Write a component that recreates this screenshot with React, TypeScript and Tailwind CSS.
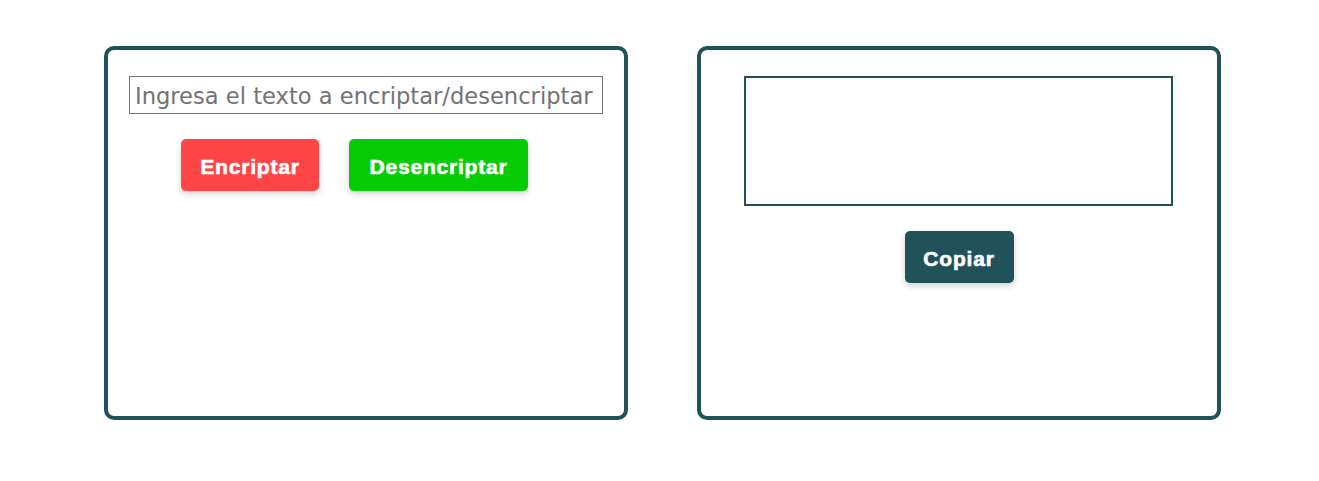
import React from "react";

const btnFont = {
  fontFamily: "'Liberation Sans', Arial, sans-serif",
  WebkitTextStroke: "0.6px white",
} as React.CSSProperties;

export default function App() {
  return (
    <div className="w-[1319px] h-[481px] bg-white flex items-start pt-[46px] pl-[104px] gap-[69px]">
      <div className="w-[524px] h-[374px] border-[4px] border-[#21525a] rounded-[10px] flex flex-col items-start pt-[26px] pl-[21px]">
        <input
          type="text"
          placeholder="Ingresa el texto a encriptar/desencriptar"
          className="w-[474px] h-[38px] border border-[#767676] px-[5px] pt-[2px] text-[22.6px] text-[#333] placeholder:text-[#737373] outline-none"
          style={{ fontFamily: "'DejaVu Sans', sans-serif" }}
        />
        <div className="flex gap-[30px] mt-[25px] ml-[52px]">
          <button
            className="w-[138px] h-[52px] rounded-[5px] bg-[#ff4646] text-white font-bold text-[21px] tracking-[0.8px] pt-[3px] shadow-[0_3px_6px_rgba(0,0,0,0.18)]"
            style={btnFont}
          >
            Encriptar
          </button>
          <button
            className="w-[179px] h-[52px] rounded-[5px] bg-[#05cc05] text-white font-bold text-[21px] tracking-[0.8px] pt-[3px] shadow-[0_3px_6px_rgba(0,0,0,0.18)]"
            style={btnFont}
          >
            Desencriptar
          </button>
        </div>
      </div>
      <div className="w-[524px] h-[374px] border-[4px] border-[#21525a] rounded-[10px] flex flex-col items-center pt-[26px]">
        <textarea className="w-[429px] h-[130px] border-2 border-[#21525a] resize-none outline-none -ml-[2px]" />
        <button
          className="mt-[25px] w-[109px] h-[52px] rounded-[5px] bg-[#21525a] text-white font-bold text-[21px] tracking-[0.8px] pt-[3px] shadow-[0_3px_6px_rgba(0,0,0,0.18)]"
          style={btnFont}
        >
          Copiar
        </button>
      </div>
    </div>
  );
}
